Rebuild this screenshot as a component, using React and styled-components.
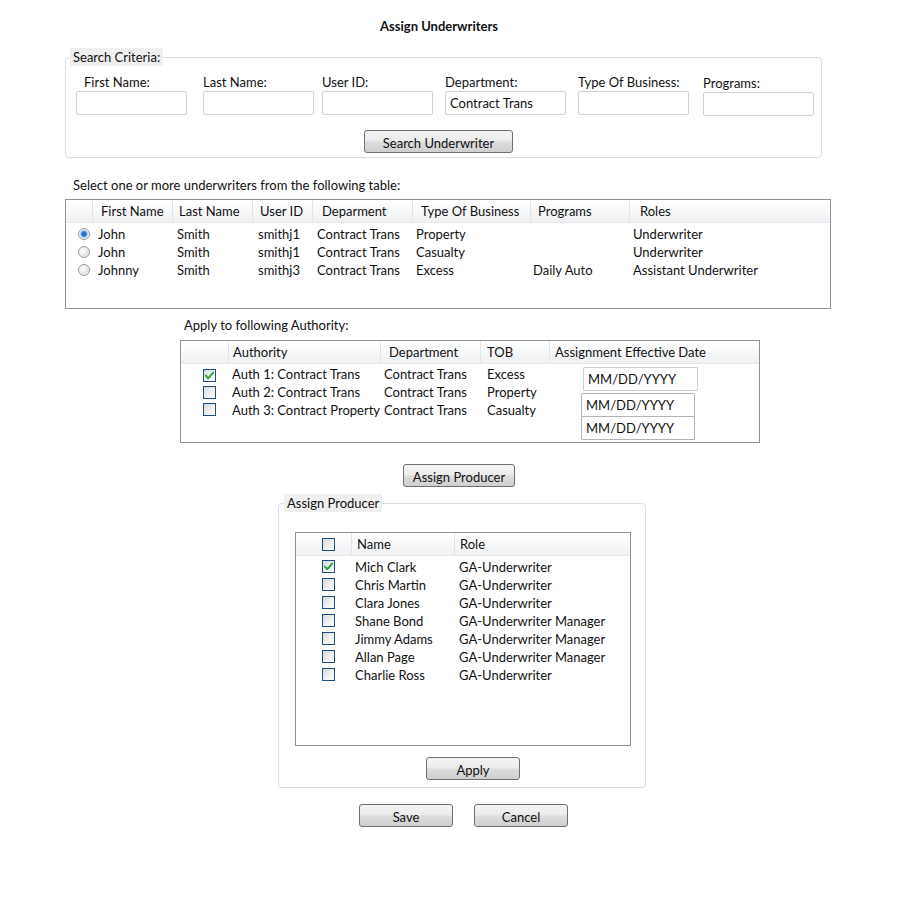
import React from 'react';
import styled, { createGlobalStyle } from 'styled-components';

const GlobalStyle = createGlobalStyle`
  html, body { margin: 0; padding: 0; background: #fff; }
  body { font-family: Lato, "Liberation Sans", sans-serif; font-size: 13px; color: #111; }
  * { box-sizing: border-box; }
`;

const Page = styled.div`
  width: 900px;
  height: 900px;
  overflow: hidden;
  display: flex;
  flex-direction: column;
  align-items: flex-start;
`;

const Title = styled.h1`
  margin: 18px 0 0;
  width: 878px;
  text-align: center;
  font-size: 13px;
  font-weight: 700;
  line-height: 16px;
`;

const Fieldset = styled.fieldset`
  margin: ${p => p.$top}px 0 0 ${p => p.$left}px;
  width: ${p => p.$width}px;
  border: 1px solid #d5dfe7;
  border-radius: 4px;
  padding: 0 0 ${p => p.$bottom}px 0;
  min-width: 0;
`;

const Legend = styled.legend`
  margin-left: ${p => p.$indent}px;
  padding: 0 3px 0 3px;
  background: #efefef;
  line-height: 18px;
  font-size: 13px;
`;

const FieldsRow = styled.div`
  display: flex;
  align-items: flex-start;
  margin-top: 8px;
  padding-left: 10px;
`;

const Field = styled.div`
  display: flex;
  flex-direction: column;
  margin-left: ${p => p.$gap}px;
  margin-top: ${p => p.$drop || 0}px;
  width: ${p => p.$width}px;
`;

const Label = styled.label`
  line-height: 16px;
  padding-left: ${p => p.$indent || 0}px;
  white-space: nowrap;
`;

const TextInput = styled.input`
  margin-top: 1px;
  height: 24px;
  width: 100%;
  border: 1px solid #d2d2d2;
  border-radius: 2px;
  padding: 0 4px;
  font: inherit;
  color: #111;
  outline: none;
  background: #fff;
`;

const Button = styled.button`
  display: block;
  margin: ${p => p.$top}px 0 0 ${p => p.$left}px;
  width: ${p => p.$width}px;
  height: 23px;
  padding: 2px 0 0;
  border: 1px solid #707070;
  border-radius: 3px;
  background: linear-gradient(#f4f4f4 0%, #ebebeb 48%, #dddddd 52%, #cfcfcf 100%);
  font: inherit;
  color: #111;
  line-height: 16px;
  cursor: pointer;
`;

const ButtonPair = styled.div`
  display: flex;
  gap: 21px;
  margin: 16px 0 0 359px;
`;

const Prompt = styled.div`
  margin: ${p => p.$top}px 0 0 ${p => p.$left}px;
  line-height: 16px;
`;

const Grid = styled.div`
  margin: ${p => p.$top}px 0 0 ${p => p.$left}px;
  width: ${p => p.$width}px;
  height: ${p => p.$height}px;
  border: 1px solid #8e9196;
  background: #fff;
  display: flex;
  flex-direction: column;
`;

const HeaderRow = styled.div`
  display: grid;
  grid-template-columns: ${p => p.$cols};
  height: 23px;
  background: linear-gradient(#ffffff 0%, #f7f8f9 50%, #eff0f2 100%);
  border-bottom: 1px solid #e4e6e9;
`;

const HeaderCell = styled.div`
  display: flex;
  align-items: center;
  padding-left: ${p => p.$pad ?? 8}px;
  border-right: 1px solid #e2e4e8;
  white-space: nowrap;
  line-height: 16px;
  &:last-child { border-right: none; }
`;

const Body = styled.div`
  padding-top: ${p => p.$pad}px;
  display: flex;
  flex-direction: column;
`;

const Row = styled.div`
  display: grid;
  grid-template-columns: ${p => p.$cols};
  height: 18px;
  align-items: center;
`;

const Cell = styled.div`
  padding-left: ${p => p.$pad ?? 4}px;
  white-space: nowrap;
  line-height: 18px;
  display: flex;
  align-items: center;
`;

const RadioDot = styled.span`
  display: inline-block;
  width: 12px;
  height: 12px;
  border-radius: 50%;
  border: 1px solid #9a9a9a;
  background: ${p => p.$on
    ? 'radial-gradient(circle at 50% 50%, #1d5fa8 0, #3d8ae0 2.5px, #a9cdf3 3.5px, #e6eef8 5px)'
    : 'radial-gradient(circle at 40% 40%, #ffffff 0, #f0f0f0 3px, #d6d6d6 6px)'};
  box-shadow: inset 0 0 0 1px #f4f4f4;
`;

const Box = styled.span`
  display: inline-flex;
  align-items: center;
  justify-content: center;
  width: 13px;
  height: 13px;
  border: 1px solid #1f4f80;
  background: linear-gradient(135deg, #d8d8d8 0%, #f2f2f2 60%, #fafafa 100%);
  margin-top: ${p => p.$nudge || 0}px;
`;

const Check = ({ on, nudge }) => (
  <Box $nudge={nudge}>
    {on && (
      <svg width="11" height="11" viewBox="0 0 11 11">
        <path d="M1.8 5.6 L4.3 8.2 L9.2 2.6" fill="none" stroke="#2ea63c" strokeWidth="2" strokeLinecap="round" strokeLinejoin="round" />
      </svg>
    )}
  </Box>
);

const AuthBody = styled.div`
  display: flex;
  flex: 1;
`;

const AuthRows = styled.div`
  width: 369px;
  padding-top: 1px;
  display: flex;
  flex-direction: column;
`;

const DateStack = styled.div`
  display: flex;
  flex-direction: column;
  padding-top: 3px;
`;

const DateInput = styled.input`
  margin-left: ${p => p.$indent}px;
  margin-top: ${p => p.$gap}px;
  width: ${p => p.$width}px;
  height: ${p => p.$height}px;
  border: 1px solid ${p => p.$light ? '#cfcfcf' : '#b4b4b4'};
  border-radius: 1px;
  padding: 0 4px;
  font: inherit;
  color: #111;
  background: #fff;
  outline: none;
`;

const InnerGrid = styled(Grid)`
  margin: 20px 0 0 16px;
`;

const UW_COLS = '27px 80px 80px 60px 100px 118px 99px 1fr';
const AUTH_COLS = '48px 152px 100px 69px';
const AUTH_HEAD_COLS = '48px 152px 100px 69px 1fr';
const PROD_COLS = '56px 103px 1fr';

const underwriters = [
  { sel: true, first: 'John', last: 'Smith', id: 'smithj1', dept: 'Contract Trans', tob: 'Property', prog: '', role: 'Underwriter' },
  { sel: false, first: 'John', last: 'Smith', id: 'smithj1', dept: 'Contract Trans', tob: 'Casualty', prog: '', role: 'Underwriter' },
  { sel: false, first: 'Johnny', last: 'Smith', id: 'smithj3', dept: 'Contract Trans', tob: 'Excess', prog: 'Daily Auto', role: 'Assistant Underwriter' },
];

const authorities = [
  { on: true, name: 'Auth 1: Contract Trans', dept: 'Contract Trans', tob: 'Excess', nudge: 2 },
  { on: false, name: 'Auth 2: Contract Trans', dept: 'Contract Trans', tob: 'Property', nudge: 0 },
  { on: false, name: 'Auth 3: Contract Property', dept: 'Contract Trans', tob: 'Casualty', nudge: -2 },
];

const producers = [
  { on: true, name: 'Mich Clark', role: 'GA-Underwriter' },
  { on: false, name: 'Chris Martin', role: 'GA-Underwriter' },
  { on: false, name: 'Clara Jones', role: 'GA-Underwriter' },
  { on: false, name: 'Shane Bond', role: 'GA-Underwriter Manager' },
  { on: false, name: 'Jimmy Adams', role: 'GA-Underwriter Manager' },
  { on: false, name: 'Allan Page', role: 'GA-Underwriter Manager' },
  { on: false, name: 'Charlie Ross', role: 'GA-Underwriter' },
];

export default function App() {
  return (
    <>
      <GlobalStyle />
      <Page>
        <Title>Assign Underwriters</Title>

        <Fieldset $top={14} $left={65} $width={757} $bottom={4}>
          <Legend $indent={4}>Search Criteria:</Legend>
          <FieldsRow>
            <Field $gap={0} $width={111}>
              <Label $indent={8}>First Name:</Label>
              <TextInput />
            </Field>
            <Field $gap={16} $width={111}>
              <Label>Last Name:</Label>
              <TextInput />
            </Field>
            <Field $gap={8} $width={111}>
              <Label>User ID:</Label>
              <TextInput />
            </Field>
            <Field $gap={12} $width={121}>
              <Label $indent={-3}>Department:</Label>
              <TextInput defaultValue="Contract Trans" />
            </Field>
            <Field $gap={12} $width={111}>
              <Label>Type Of Business:</Label>
              <TextInput />
            </Field>
            <Field $gap={14} $width={111} $drop={1}>
              <Label>Programs:</Label>
              <TextInput />
            </Field>
          </FieldsRow>
          <Button $top={14} $left={298} $width={149}>Search Underwriter</Button>
        </Fieldset>

        <Prompt $top={19} $left={73}>Select one or more underwriters from the following table:</Prompt>

        <Grid $top={6} $left={65} $width={766} $height={110}>
          <HeaderRow $cols={UW_COLS}>
            <HeaderCell />
            <HeaderCell>First Name</HeaderCell>
            <HeaderCell $pad={6}>Last Name</HeaderCell>
            <HeaderCell $pad={7}>User ID</HeaderCell>
            <HeaderCell $pad={9}>Deparment</HeaderCell>
            <HeaderCell>Type Of Business</HeaderCell>
            <HeaderCell $pad={7}>Programs</HeaderCell>
            <HeaderCell $pad={10}>Roles</HeaderCell>
          </HeaderRow>
          <Body $pad={2}>
            {underwriters.map((u, i) => (
              <Row key={i} $cols={UW_COLS}>
                <Cell $pad={12}><RadioDot $on={u.sel} /></Cell>
                <Cell $pad={5}>{u.first}</Cell>
                <Cell>{u.last}</Cell>
                <Cell $pad={5}>{u.id}</Cell>
                <Cell>{u.dept}</Cell>
                <Cell $pad={3}>{u.tob}</Cell>
                <Cell $pad={2}>{u.prog}</Cell>
                <Cell $pad={3}>{u.role}</Cell>
              </Row>
            ))}
          </Body>
        </Grid>

        <Prompt $top={8} $left={184}>Apply to following Authority:</Prompt>

        <Grid $top={7} $left={180} $width={580} $height={103}>
          <HeaderRow $cols={AUTH_HEAD_COLS}>
            <HeaderCell />
            <HeaderCell $pad={4}>Authority</HeaderCell>
            <HeaderCell $pad={8}>Department</HeaderCell>
            <HeaderCell $pad={6}>TOB</HeaderCell>
            <HeaderCell $pad={5}>Assignment Effective Date</HeaderCell>
          </HeaderRow>
          <AuthBody>
            <AuthRows>
              {authorities.map((a, i) => (
                <Row key={i} $cols={AUTH_COLS}>
                  <Cell $pad={22}><Check on={a.on} nudge={a.nudge} /></Cell>
                  <Cell $pad={3}>{a.name}</Cell>
                  <Cell $pad={3}>{a.dept}</Cell>
                  <Cell $pad={6}>{a.tob}</Cell>
                </Row>
              ))}
            </AuthRows>
            <DateStack>
              <DateInput $indent={33} $gap={0} $width={115} $height={24} $light defaultValue="MM/DD/YYYY" />
              <DateInput $indent={31} $gap={2} $width={114} $height={24} defaultValue="MM/DD/YYYY" />
              <DateInput $indent={31} $gap={-1} $width={114} $height={24} defaultValue="MM/DD/YYYY" />
            </DateStack>
          </AuthBody>
        </Grid>

        <Button $top={21} $left={403} $width={112}>Assign Producer</Button>

        <Fieldset $top={7} $left={278} $width={368} $bottom={7}>
          <Legend $indent={5}>Assign Producer</Legend>
          <InnerGrid $width={336} $height={214}>
            <HeaderRow $cols={PROD_COLS}>
              <HeaderCell $pad={26}><Check on={false} /></HeaderCell>
              <HeaderCell $pad={5}>Name</HeaderCell>
              <HeaderCell $pad={5}>Role</HeaderCell>
            </HeaderRow>
            <Body $pad={2}>
              {producers.map((p, i) => (
                <Row key={i} $cols={PROD_COLS}>
                  <Cell $pad={26}><Check on={p.on} nudge={-1} /></Cell>
                  <Cell $pad={3}>{p.name}</Cell>
                  <Cell $pad={4}>{p.role}</Cell>
                </Row>
              ))}
            </Body>
          </InnerGrid>
          <Button $top={11} $left={147} $width={94}>Apply</Button>
        </Fieldset>

        <ButtonPair>
          <Button $top={0} $left={0} $width={94}>Save</Button>
          <Button $top={0} $left={0} $width={94}>Cancel</Button>
        </ButtonPair>
      </Page>
    </>
  );
}
